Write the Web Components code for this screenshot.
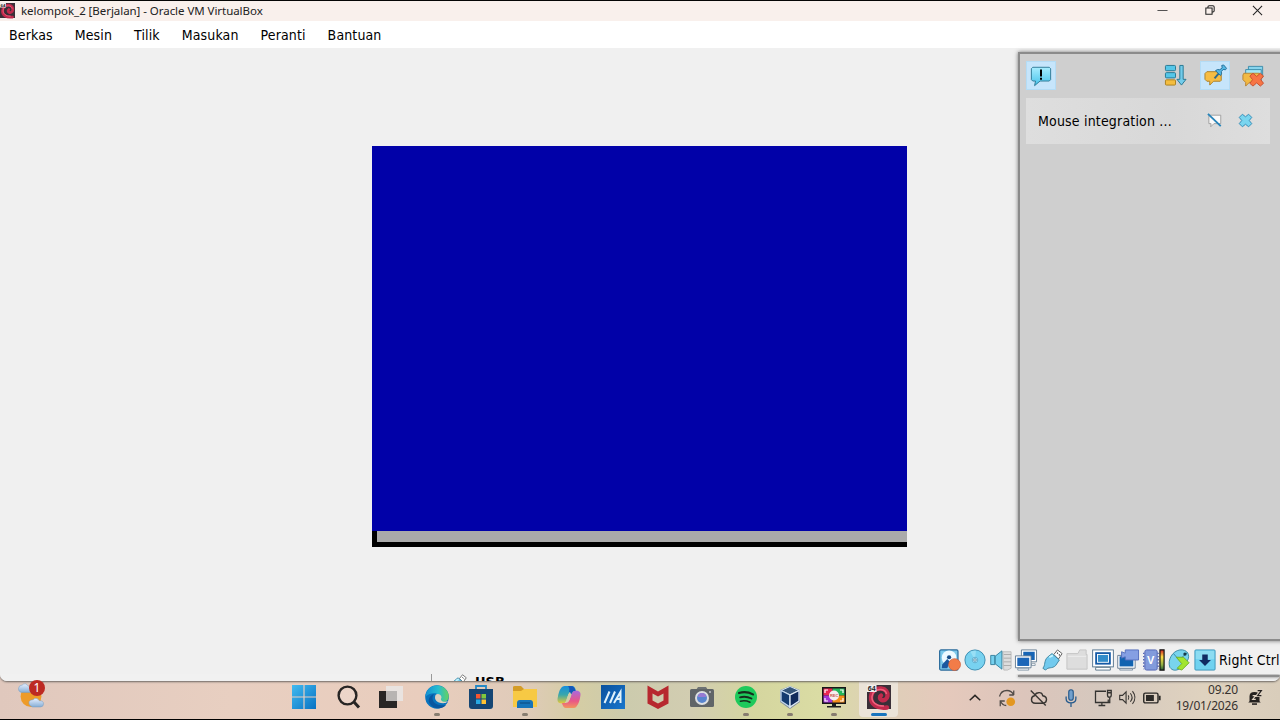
<!DOCTYPE html>
<html lang="id">
<head>
<meta charset="utf-8">
<title>kelompok_2 [Berjalan] - Oracle VM VirtualBox</title>
<style>
html, body { margin: 0; height: 100%; overflow: hidden; }
body { background: #000; font-family: "Noto Sans", sans-serif; color: #111; }
</style>
</head>
<body>
<vm-desktop>
  <vm-window>
    <vm-titlebar slot="title">kelompok_2 [Berjalan] - Oracle VM VirtualBox</vm-titlebar>
    <vm-menubar slot="menu">
      <span>Berkas</span><span>Mesin</span><span>Tilik</span><span>Masukan</span><span>Peranti</span><span>Bantuan</span>
    </vm-menubar>
    <vm-screen></vm-screen>
    <vm-notifications slot="overlay">Mouse integration ...</vm-notifications>
    <vm-statusbar slot="status">Right Ctrl</vm-statusbar>
    <vm-behind slot="behind">USB</vm-behind>
  </vm-window>
  <os-taskbar></os-taskbar>
</vm-desktop>

<script>
const ICONS = {
  debian64: `<rect width="24" height="24" fill="#3a2f38"/>
    <path d="M20 22.500C10 24 3.500 19 4 12c.4-6 5-9 10-8.500 5 .5 7 4 6.500 7.500-.5 3.500-3.500 5-6 4-2-1-2-3.500-.5-4.500" fill="none" stroke="#c02a4c" stroke-width="4.400" stroke-linecap="round"/>
    <path d="M17 21C9 21 4.500 17 5 11.500 5.500 7 9.500 4 14 4.500c3 .3 5 2 5.500 4.500" fill="none" stroke="#f0607c" stroke-width="1.500"/>
    <path d="M0 0h9.500v7H0z" fill="#f1eeee"/><text x=".8" y="6" font-size="7" font-weight="bold" font-family="Liberation Sans, sans-serif" fill="#222">64</text>`,
  bubble: `<defs><linearGradient id="a" x2="0" y2="1"><stop stop-color="#a8edff"/><stop offset="1" stop-color="#45c3ea"/></linearGradient></defs>
    <path d="M3 2.500h18l1.500 1.500v12L21 17.500H11l-6 5 1-5H3L1.500 16V4z" fill="url(#a)" stroke="#2b7592"/><path d="M12 5v7.500M12 14v2" stroke="#000" stroke-width="2.200"/>`,
  sort: `<g stroke="#277792"><rect x="1.500" y="1.500" width="10.500" height="5.500" rx="1" fill="#55c6e8"/><rect x="1.500" y="9" width="10.500" height="5.500" rx="1" fill="#55c6e8"/><rect x="1.500" y="16.500" width="10.500" height="5.500" rx="1" fill="#f4bd3f" stroke="#aa811e"/>
    <path d="M16.500 1.500h3.500V16h3l-4.750 6-4.750-6h3z" fill="#73cceb"/></g>`,
  pinned: `<path d="M3 8h14l1 1v8l-1 1h-7l-4 4v-4H3l-2-2V10z" fill="#f6bd43" stroke="#a9812d"/>
    <path d="M11 15l6-7" stroke="#316b89" stroke-width="2"/><path d="M12 7q2-2 4.500-1l2.500-2-.5-2.500L20.500 1l3 3.500-1 1.500-2.500-.3-2 2.300q1 2.500-.8 4z" fill="#54b8e4" stroke="#236f9a"/>`,
  clear: `<path d="M7 1.500h15.500v12H7z" fill="#87d4ed" stroke="#398aa8"/><path d="M4 5h17v12H4z" fill="#a4e5f5" stroke="#398aa8"/>
    <path d="M2 9h17v10H8l-4 4v-4l-3-3v-5z" fill="#f2b943" stroke="#b7802e"/><path d="M12 9l4 3.500L20 9l3.500 3-3 4 3 4-3.500 3-4-3.500L12 23l-3.500-3 3-4-3-4z" fill="#f77545" stroke="#c64e2d"/>`,
  mute: `<path d="M3 3.500h19v13.500H11l-5 5 .5-5H3z" fill="#fafafa" stroke="#999" stroke-width="1.400"/><path d="M1.500 1.500L22 21" stroke="#2784ba" stroke-width="3"/>`,
  close: `<path d="M7 2l5 4 5-4 5 5-4 5 4 5-5 5-5-4-5 4-5-5 4-5-4-5z" fill="#79d5ef" stroke="#388eb8" stroke-width="1.600"/>`,
  disk: `<rect x=".7" y="1" width="20" height="22" rx="1.500" fill="#7cc8ea" stroke="#286a9b" stroke-width="1.300"/><circle cx="11" cy="9.500" r="8" fill="#eefaff"/><circle cx="11" cy="9" r="2.300" fill="#174d89"/><path d="M3 21l.5-4L9 11l3 3-3 7z" fill="#1b58a0"/><circle cx="17" cy="17" r="6.500" fill="#f27c48" stroke="#c95735" stroke-width=".7"/>`,
  cd: `<circle cx="12" cy="12" r="11" fill="#78d2f0" stroke="#3688ad"/><path d="M12 12L7 3a10 10 0 0 1 6-1z" fill="#98dff5"/><circle cx="12" cy="12" r="3" fill="#b5eaff" stroke="#549dbd" stroke-width=".8"/><circle cx="12" cy="12" r="1.400" fill="#fff" stroke="#367793" stroke-width=".8"/>`,
  audio: `<path d="M14 3h9v18l-4 2h-4z" fill="#ddd" stroke="#bbb"/><path d="M15 6h8M15 10h8M15 14h8M15 18h8" stroke="#aaa"/><path d="M.8 7h4.500v10H.8zM5.500 8L13 2v20l-7.500-6z" fill="#75d0ee" stroke="#327f9c"/>`,
  network: `<path d="M7 1h16.500v13H7z" fill="#fff" stroke="#637b91"/><path d="M9 3h12.500v9H9z" fill="#1664b5"/><path d="M18 16h4v2h-4z" fill="#fff" stroke="#637b91" stroke-width=".7"/><path d="M.5 7.500h17v13H.5z" fill="#fff" stroke="#637b91"/><path d="M2.500 9.500h13v9h-13z" fill="#1c66b8"/><path d="M3 21h12v2H3z" fill="#fff" stroke="#637b91" stroke-width=".8"/>`,
  usb: `<path d="M14 6l4-5 5 4-4 6z" fill="#fff" stroke="#555"/><path d="M17.500 4l1 1m1 1l1 1" stroke="#333" stroke-width="1.200"/><path d="M12 5l8 7-4 6c-4 4-8 1-11 5l-3-2c3-3 1-8 5-12z" fill="#72caee" stroke="#3a829e"/><path d="M9 9l4-2" stroke="#c5f5ff" stroke-width="2"/>`,
  folder: `<path d="M1 5h12l2-4h7v5h1v16H1z" fill="#ddd" stroke="#c3c3c3"/><path d="M2 8h20" stroke="#eee"/>`,
  display: `<rect x=".7" y="1" width="22.600" height="18.500" fill="#fff" stroke="#52728d"/><rect x="3.500" y="3.500" width="17" height="13.500" fill="#155aa6"/><rect x="6" y="6" width="12" height="8.500" fill="#328cca" stroke="#fff"/><path d="M4 20h16v3H4z" fill="#fff" stroke="#577285"/>`,
  record: `<path d="M.8 7h19v14H.8z" fill="#fff" stroke="#667b91"/><path d="M2.800 8h15v11h-15z" fill="#1263b0"/><path d="M3 21.500h14V23H3z" fill="#fff" stroke="#667b91" stroke-width=".8"/><path d="M5 3l4 1.500V1h14.500v11H9V8.500L5 10z" fill="#859fe3" stroke="#526cbb"/>`,
  cpu: `<rect x="2" y="1" width="13.500" height="22" rx="2" fill="#829bdc" stroke="#5063b2"/><path d="M.8 4v18M16.500 4v18" stroke="#5063b2" stroke-width="1.500" stroke-dasharray="1.500 2"/><text x="4.400" y="16" font-size="12" font-weight="bold" font-family="Liberation Sans" fill="#fff">V</text><defs><linearGradient id="b" x2="0" y2="1"><stop stop-color="#c22"/><stop offset=".35" stop-color="#fd4"/><stop offset=".75" stop-color="#8a4"/><stop offset="1" stop-color="#253"/></linearGradient></defs><path d="M18.500 1h4.500v22h-4.500z" fill="url(#b)" stroke="#111" stroke-width="1.300"/>`,
  mouse: `<path d="M2 20C-1 12 5 2 13 1c8-1 12 6 8 12S8 28 2 20z" fill="#78d4ed" stroke="#37859f"/><path d="M6 5l6 7L21 4" stroke="#37859f" fill="none"/><path d="M9 9h8l6 6-8 8-5-2 5-5z" fill="#a1e52e" stroke="#6dad28"/><circle cx="18.500" cy="5.500" r="1.800" fill="#173a48"/>`,
  capture: `<rect x="1" y="1" width="22" height="22" rx="1" fill="#70d2f0" stroke="#3a93b7"/><path d="M2 2h20v9H2z" fill="#8cdcf2"/><path d="M9 6h6v6h3.500L12 18.500 5.500 12H9z" fill="#102b62"/>`,
  windows: `<defs><linearGradient id="w" x2="1" y2="1"><stop stop-color="#42baf0"/><stop offset="1" stop-color="#0872c3"/></linearGradient></defs><path d="M0 0h11.400v11.400H0zM12.600 0H24v11.400H12.600zM0 12.600h11.400V24H0zM12.600 12.600H24V24H12.600z" fill="url(#w)"/>`,
  search: `<circle cx="11.500" cy="10.500" r="8.900" fill="#ffffff28" stroke="#272524" stroke-width="2.400"/><path d="M18 17l5 5.500" stroke="#272524" stroke-width="3"/>`,
  taskview: `<path d="M-1 6h18v17H-1z" fill="#292625"/><path d="M6 1h17v15H6z" fill="#e8e6e5" opacity=".88"/><path d="M6 6h11v10H6z" fill="#b8b4b2"/>`,
  edge: `<defs><linearGradient id="e" x2="1"><stop stop-color="#148ed2"/><stop offset=".55" stop-color="#25bdd0"/><stop offset="1" stop-color="#68d25d"/></linearGradient></defs><circle cx="12" cy="12" r="11.800" fill="#0873bd"/><path d="M.3 12C1 2 10-2 18 2c7 4 8 14 1 15-4 1-6-1-4-4 2-4-8-8-14.700-1z" fill="url(#e)"/><path d="M9 9c-4 5 0 13 12 11-4 5-13 4-16-1-3-4 0-9 4-10z" fill="#09569f"/><path d="M10.500 10c-2 5 2 9 10 8l3-2c-5 2-9 0-7-3.500C16.500 9 12 8 10.500 10z" fill="#ddd1bf"/>`,
  store: `<path d="M7 5V1h10v4" fill="none" stroke="#2589c5" stroke-width="1.800"/><path d="M0 4h24v17q0 3-3 3H3q-3 0-3-3z" fill="#154674"/><path d="M7 9h4.500v4.500H7z" fill="#f45530"/><path d="M12.500 9H17v4.500h-4.500z" fill="#82c83d"/><path d="M7 14.500h4.500V19H7z" fill="#28a9e2"/><path d="M12.500 14.500H17V19h-4.500z" fill="#ffc332"/>`,
  explorer: `<path d="M0 2q0-1 2-1h6l3 3h12q1 0 1 1v17H0z" fill="#d49c26"/><path d="M0 6h8l3-2h13v18H0z" fill="#f7c944"/><path d="M4 23v-5q0-3 3-3h10q3 0 3 3v5z" fill="#1774b9"/><path d="M7 18h10" stroke="#105792" stroke-width="1.500"/>`,
  copilot: `<defs><linearGradient id="c1" x2="0" y2="1"><stop stop-color="#168edc"/><stop offset=".5" stop-color="#39a7ac"/><stop offset="1" stop-color="#e8c937"/></linearGradient><linearGradient id="c2" x2="0" y2="1"><stop stop-color="#a96adf"/><stop offset=".6" stop-color="#e95687"/><stop offset="1" stop-color="#f3955d"/></linearGradient></defs>
    <path d="M7.500 1H15q3 0 4 5h-3.500q-3 0-4 3l-2.500 7q-1 2.500-3.500 2.500Q0 18.500.5 14 1.500 6 4.500 2.500 5.500 1 7.500 1z" fill="url(#c1)"/><path d="M16.500 23H9q-3 0-4-5h3.500q3 0 4-3L15 8q1-2.500 3.500-2.500 5.500 0 5 4.500-1 8-4 11.500-1 1.500-3 1.500z" fill="url(#c2)"/>
    <path d="M14 1q3.500 0 4.500 4.700Q16 5.500 15 8l-1 2q0-3-2-3 1-4-1-6z" fill="#1557b9"/><path d="M11.500 9h3L12.500 15h-3z" fill="#d4cda6"/>`,
  myasus: `<defs><linearGradient id="m" x2="1" y2="1"><stop stop-color="#0b519d"/><stop offset="1" stop-color="#1776cd"/></linearGradient></defs><path d="M0 0h24v24H0z" fill="url(#m)"/><path d="M3.500 18l5-11.500M9 18l5-11.500M13 18l6.500-11v11m-4-4h4" fill="none" stroke="#e0f2fb" stroke-width="2"/>`,
  mcafee: `<path d="M1.500.5l10.500 6 10.500-6v18L12 24 1.500 18.500zM6.500 8.500v7L12 18.500l5.500-3v-7L12 11.500z" fill="#b7282f" fill-rule="evenodd"/>`,
  camera: `<path d="M6 5l2-3h8l2 3z" fill="#6e7274"/><rect y="4" width="24" height="18" rx="1.500" fill="#606568"/><circle cx="12" cy="13" r="7" fill="#dddfe1"/><circle cx="12" cy="13" r="5" fill="#5985ce"/><path d="M8 12a4 4 0 0 1 8 0z" fill="#987bd3"/><path d="M19 7h2" stroke="#eee"/>`,
  spotify: `<circle cx="12" cy="12" r="11" fill="#1ec95b"/><g fill="none" stroke="#172d1d" stroke-linecap="round"><path d="M5 8c5-1.500 10-.7 14 1.400" stroke-width="2.200"/><path d="M6 12.300c4-1.100 8-.5 11.500 1.200" stroke-width="1.800"/><path d="M6.500 16.200c3.500-.8 6.500-.4 9.500 1" stroke-width="1.600"/></g>`,
  virtualbox: `<path d="M12 1l10 4v12l-10 7-10-7V5z" fill="#84909d"/><path d="M12 1.500L21 5.500 12 10 3 5.500z" fill="#35567c" stroke="#d1e0ec"/><path d="M3 5.500l9 4.500v12l-9-6z" fill="#153b70" stroke="#c4d8ed" stroke-width="1.300"/><path d="M21 5.500L12 10v12l9-6z" fill="#102b5d" stroke="#dfebf6" stroke-width="1.300"/>`,
  recorder: `<path d="M0 2h24v17H0z" fill="#171719"/><path d="M1.500 3.500h9v7h-9z" fill="#ea2754"/><path d="M10.500 3.500h12v7h-12z" fill="#24b75b"/><path d="M1.500 10.500h9v7h-9z" fill="#a234d4"/><path d="M10.500 10.500h12v7h-12z" fill="#f58e1b"/><path d="M3 8V5h3m12 0h3v3m0 5v3h-3M6 16H3v-3" fill="none" stroke="#fff" stroke-width="1.200"/><circle cx="12" cy="10.500" r="5" fill="#f7efef"/><text x="7.900" y="12" font-size="4" font-family="Liberation Sans" font-weight="bold" fill="#cd584b">REC</text><path d="M10 19h4v2h5v1.500H5V21h5z" fill="#1c1c1c"/>`,
  weather: `<defs><linearGradient id="cl" x2="0" y2="1"><stop stop-color="#e6efff"/><stop offset="1" stop-color="#86aed5"/></linearGradient></defs><circle cx="12.500" cy="13" r="10" fill="#ee9b28"/><path d="M3 9q-3-1-2.500-4Q1 2 4 2q3-3 6 1 4 0 4 3t-3 3z" fill="url(#cl)" stroke="#779dc1" stroke-width=".5"/><path d="M12 22q-2-1-1.500-4 1-2 4-2 3-3 6 1 4 0 4 3t-3 3H14z" fill="url(#cl)" stroke="#779dc1" stroke-width=".5"/>`,
  up: `<path d="M5 15l7-6.500L19 15" fill="none" stroke="#292624" stroke-width="2"/>`,
  sync: `<g fill="none" stroke="#514b47" stroke-width="1.700"><path d="M2 10Q4 2 12 2q6 0 9 6V2m0 6h-6M3 23v-7h6M3 16q3 6 8 6"/></g><circle cx="17" cy="17" r="5.800" fill="#e39721"/>`,
  cloudoff: `<path d="M7 19h11q4-1 4-5t-5-5q-1-5-6-4-3 0-5 4-4 1-4 5 0 5 5 5zM1 2l20 20" fill="none" stroke="#393633" stroke-width="1.900"/>`,
  mic: `<rect x="9" y="1" width="6" height="14" rx="3" fill="#72a0cd" stroke="#245789" stroke-width="1.500"/><path d="M5.500 10v3q0 5.500 6.500 5.500t6.500-5.500v-3M12 18.500V24" fill="none" stroke="#24598c" stroke-width="1.700"/>`,
  pc: `<path d="M16 3H2v15h17v-4M6 22h9m-4.500-4v4M18 2h5v6q0 3-2.500 3T18 8zm0 3h5m-2 6v7h-4" fill="none" stroke="#343331" stroke-width="1.700"/>`,
  volume: `<path d="M1 9h4l5-5v16l-5-5H1z" fill="none" stroke="#393633" stroke-width="1.600"/><path d="M13 9q2 3 0 6m3-9q5 6 0 12m3-15q7 9 0 18" fill="none" stroke="#393633" stroke-width="1.500"/>`,
  battery: `<rect x="1" y="5.500" width="19" height="13" rx="2" fill="none" stroke="#2b2926" stroke-width="1.900"/><path d="M4 8h10.500v8H4z" fill="#2b2926"/><path d="M21 9h2.500v6H21z" fill="#2b2926"/>`,
  bell: `<path d="M4 18V10q0-7 8-7t8 7v8l2 2H2z" fill="#24211f"/><path d="M8 22.500h8" stroke="#24211f" stroke-width="2.500"/><path d="M9 9h5l-5 6h5" fill="none" stroke="#ded1c2" stroke-width="1.800"/><path d="M16 1h7l-6.500 8H23" fill="none" stroke="#ded1c2" stroke-width="4.500"/><path d="M17 1h6l-6 8h6" fill="none" stroke="#24211f" stroke-width="1.900"/>`,
  min: `<path d="M1 12h22" stroke="#444" stroke-width="2"/>`,
  restore: `<path d="M2 7h15v15H2zM7 7V5q0-3 3-3h9q3 0 3 3v9q0 3-3 3h-2" fill="none" stroke="#222" stroke-width="2.500"/>`,
  exit: `<path d="M2 2l20 20M22 2L2 22" stroke="#222" stroke-width="2.200"/>`,
}

function define(name, html) {
  customElements.define(name, class extends HTMLElement {
    constructor() {
      super()
      this.attachShadow({ mode: 'open' }).innerHTML = html
    }
  })
}

class UiIcon extends HTMLElement {
  constructor() {
    super()
    this.attachShadow({ mode: 'open' })
  }

  connectedCallback() {
    const size = this.getAttribute('size') || 24
    this.shadowRoot.innerHTML = /* html */ `
      <style>
        :host { display: block; width: ${size}px; height: ${size}px; flex: none; }
        svg { display: block; width: 100%; height: 100%; overflow: visible; }
      </style>
      <svg viewBox="0 0 24 24">${ICONS[this.getAttribute('name')] || ''}</svg>
    `
  }
}
customElements.define('ui-icon', UiIcon)

define('vm-desktop', /* html */ `
  <style>
    :host {
      display: grid;
      grid-template-rows: 680px 38px;
      box-sizing: border-box;
      width: 1280px;
      height: 720px;
      padding: 1px 0;
      overflow: hidden;
      background: linear-gradient(90deg, #e0c8bd 0, #e8cfc1 18%, #e9cdbd 33%, #dfcbb9 41%, #d5cda4 45%, #cccbad 49%, #d2cdb1 54%, #d5d69f 59%, #dadca4 64%, #decfb8 69%, #e5c9bc 74%, #dcc5bb 80%, #d5c8be 86%, #dfd2bf 94%, #d9cdbb 100%);
      background-clip: content-box;
      background-color: transparent;
    }
  </style>
  <slot></slot>`)

define('vm-window', /* html */ `
  <style>
    :host {
      position: relative;
      display: grid;
      grid-template-rows: 20px 27px 597px 29px 7px;
      overflow: hidden;
      background: #f0f0f0;
      border-radius: 0 0 7px 7px;
      box-shadow: 0 1px 2px #6d6763;
    }
    main { display: grid; place-items: center; }
  </style>
  <slot name="title"></slot>
  <slot name="menu"></slot>
  <main><slot></slot></main>
  <slot name="overlay"></slot>
  <slot name="status"></slot>
  <slot name="behind"></slot>`)

define('vm-titlebar', /* html */ `
  <style>
    :host { display: flex; align-items: center; box-sizing: border-box; padding-bottom: 2px; background: #f9f0ec; font: 11.500px "Noto Sans", sans-serif; color: #222; }
    .name { margin-left: 6px; white-space: nowrap; letter-spacing: -0.05px; }
    .controls { display: flex; gap: 37px; margin: 0 17px 0 auto; align-items: center; }
  </style>
  <ui-icon name="debian64" size="15"></ui-icon>
  <span class="name"><slot></slot></span>
  <div class="controls">
    <ui-icon name="min" size="11"></ui-icon>
    <ui-icon name="restore" size="10"></ui-icon>
    <ui-icon name="exit" size="11"></ui-icon>
  </div>`)

define('vm-menubar', /* html */ `
  <style>
    :host {
      display: flex;
      align-items: center;
      gap: 22px;
      padding: 0 9px;
      background: #fff;
      color: #000;
      font: condensed 14px "DejaVu Sans Condensed", "DejaVu Sans", sans-serif;
      letter-spacing: 0.130px;
    }
  </style>
  <slot></slot>`)

define('vm-screen', /* html */ `
  <style>
    :host { display: grid; grid-template-rows: 385px 11px 5px; width: 535px; margin-right: 1px; background: #000; }
    .paper { background: #0101a8; }
    .status { margin-left: 5px; background: #aaa; }
  </style>
  <div class="paper"></div>
  <div class="status"></div>`)

define('vm-notifications', /* html */ `
  <style>
    :host {
      position: absolute;
      left: 1018px;
      top: 51px;
      width: 270px;
      height: 589px;
      box-sizing: border-box;
      padding: 7px 18px 0 6px;
      border: 2px solid #8b8b8b;
      background: #cfcfcf;
      box-shadow: 0 0 4px #777;
    }
    .tools { display: flex; align-items: center; height: 29px; }
    .button { display: grid; place-items: center; width: 30px; height: 29px; }
    .on { background: #c6e5fb; box-shadow: inset 0 0 0 1px #b4dcf5; }
    .first { margin-right: auto; }
    .sort { margin-right: 10px; }
    .clear { margin: 0 0 0 8px; }
    .item {
      display: flex;
      align-items: center;
      gap: 16px;
      width: 244px;
      height: 46px;
      margin-top: 8px;
      padding: 0 17px 1px 12px;
      box-sizing: border-box;
      background: linear-gradient(90deg, #dedede, #d8d8d8 60%, #dedede);
      color: #000;
      font: condensed 14px "DejaVu Sans Condensed", "DejaVu Sans", sans-serif;
      letter-spacing: 0.180px;
      white-space: nowrap;
    }
    .text { margin-right: auto; }
  </style>
  <div class="tools">
    <div class="button on first"><ui-icon name="bubble" size="22"></ui-icon></div>
    <div class="button sort"><ui-icon name="sort" size="23"></ui-icon></div>
    <div class="button on"><ui-icon name="pinned" size="23"></ui-icon></div>
    <div class="button clear"><ui-icon name="clear" size="22"></ui-icon></div>
  </div>
  <div class="item">
    <span class="text"><slot></slot></span>
    <ui-icon name="mute" size="15"></ui-icon>
    <ui-icon name="close" size="15"></ui-icon>
  </div>`)

define('vm-statusbar', /* html */ `
  <style>
    :host {
      display: flex;
      align-items: center;
      justify-content: flex-end;
      gap: 3.500px;
      padding-top: 1px;
      box-sizing: border-box;
      background: #f0f0f0;
      color: #000;
      font: condensed 14px "DejaVu Sans Condensed", "DejaVu Sans", sans-serif;
      letter-spacing: 0.100px;
      white-space: nowrap;
    }
    .host-key { width: 61px; }
  </style>
  ${['disk', 'cd', 'audio', 'network', 'usb', 'folder', 'display', 'record', 'cpu', 'mouse', 'capture']
    .map(name => `<ui-icon name="${name}" size="22"></ui-icon>`).join('')}
  <span class="host-key"><slot></slot></span>`)

// the strip of the manager window that shows below the status bar
define('vm-behind', /* html */ `
  <style>
    :host { display: flex; height: 7px; overflow: hidden; background: #f1f1f1; font: bold 14px/14px "DejaVu Sans", sans-serif; color: #000; }
    .rule { width: 1px; margin-left: 431px; background: #999; }
    ui-icon { margin: 0 8px 0 17px; }
    .label { margin-top: 1px; font-size: 13px; }
    .shade { height: 2px; width: 262px; margin: 1px 0 0 auto; background: #8e8e8e; box-shadow: 0 0 3px #666; }
  </style>
  <div class="rule"></div>
  <ui-icon name="usb" size="18"></ui-icon>
  <span class="label"><slot></slot></span>
  <div class="shade"></div>`)

const APPS = [
  ['windows'], ['search'], ['taskview'], ['edge', 'run'], ['store'], ['explorer', 'run'], ['copilot'],
  ['myasus'], ['mcafee'], ['camera'], ['spotify', 'run'], ['virtualbox', 'run'], ['recorder', 'run'], ['debian64', 'active'],
]

define('os-taskbar', /* html */ `
  <style>
    :host { display: grid; grid-template-columns: 282px 618px 1fr; font: 12px "Noto Sans", sans-serif; color: #37322f; }
    .weather { position: relative; padding: 2px 0 0 18px; }
    .badge {
      position: absolute;
      left: 29px;
      top: -1px;
      width: 16px;
      height: 16px;
      border-radius: 50%;
      background: #bd2922;
      color: #fff;
      text-align: center;
      font: 12px/16px "Noto Sans", sans-serif;
    }
    .apps { display: grid; grid-template-columns: repeat(14, 44.200px); }
    .app { display: flex; flex-direction: column; align-items: center; box-sizing: border-box; height: 38px; padding-top: 4px; }
    .app::after { content: ""; width: 6px; height: 3px; margin-top: 4px; border-radius: 2px; }
    .run::after { background: #877d70; }
    .active { margin: 0 3px; background: #ebe3d8; border-radius: 0 0 4px 4px; height: 36px; }
    .active::after { width: 16px; background: #1974bd; }
    .tray { display: flex; align-items: center; padding: 0 18px 5px 66px; }
    .clock { margin: 0 9px 0 auto; text-align: right; line-height: 16px; letter-spacing: -0.150px; }
  </style>
  <div class="weather"><ui-icon name="weather" size="25"></ui-icon><span class="badge">1</span></div>
  <div class="apps">
    ${APPS.map(([name, state = '']) => `<div class="app ${state}"><ui-icon name="${name}" size="24"></ui-icon></div>`).join('')}
  </div>
  <div class="tray">
    <ui-icon name="up" size="18"></ui-icon>
    <ui-icon name="sync" size="18" style="margin-left:14px"></ui-icon>
    <ui-icon name="cloudoff" size="18" style="margin-left:14px"></ui-icon>
    <ui-icon name="mic" size="18" style="margin-left:14px"></ui-icon>
    <ui-icon name="pc" size="18" style="margin-left:14px"></ui-icon>
    <ui-icon name="volume" size="17" style="margin-left:7px"></ui-icon>
    <ui-icon name="battery" size="18" style="margin-left:7px"></ui-icon>
    <div class="clock">09.20<br>19/01/2026</div>
    <ui-icon name="bell" size="15"></ui-icon>
  </div>`)
</script>
</body>
</html>
